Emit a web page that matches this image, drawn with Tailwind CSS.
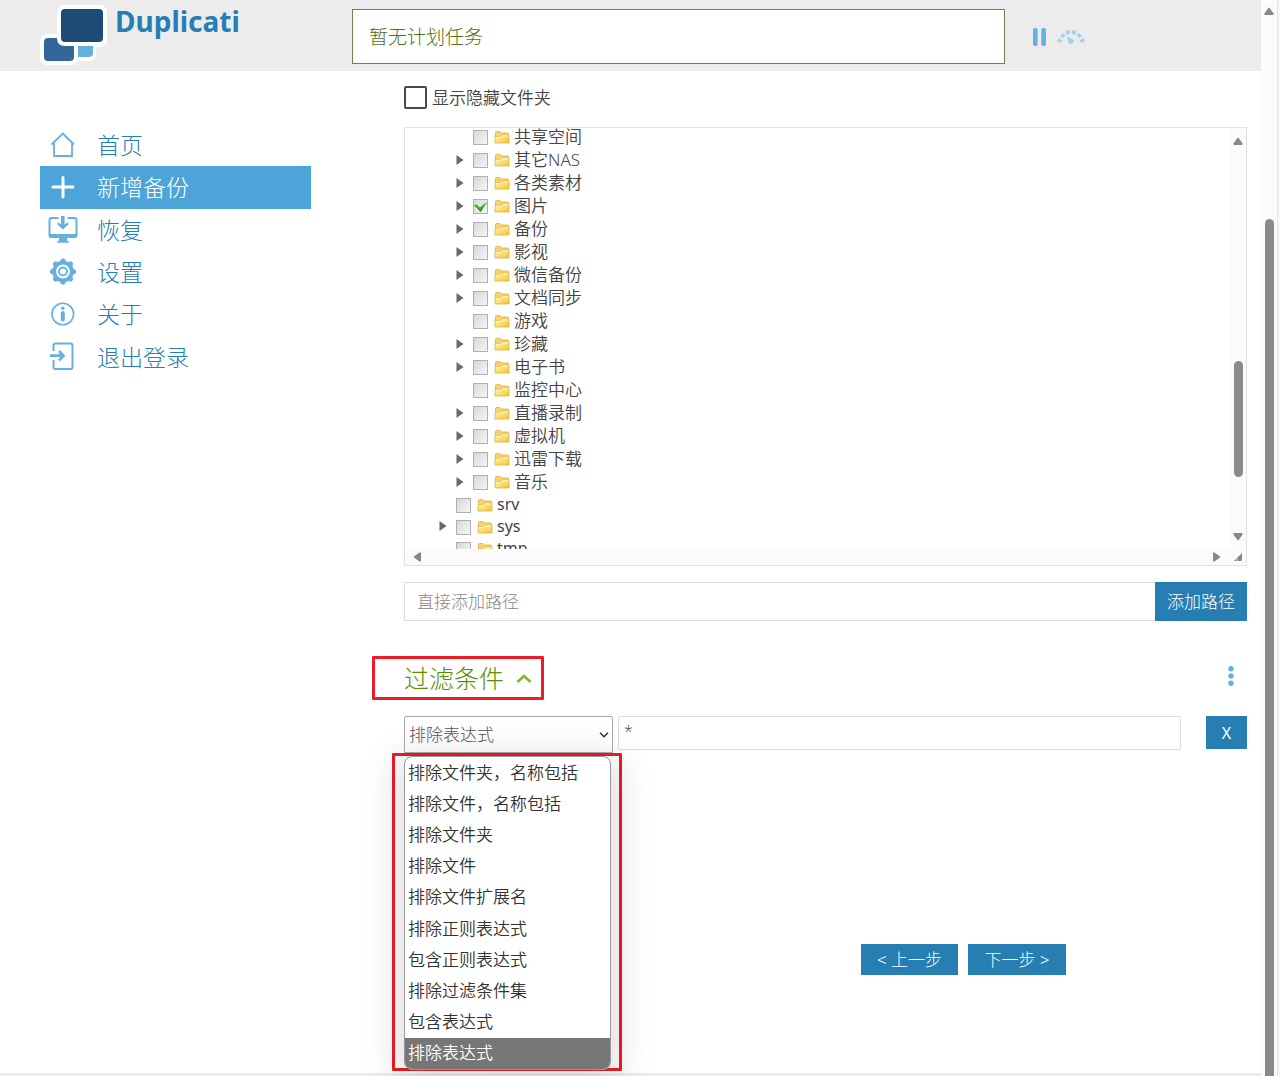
<!DOCTYPE html>
<html lang="zh-CN">
<head>
<meta charset="utf-8">
<title>Duplicati</title>
<script src="https://cdn.jsdelivr.net/npm/@tailwindcss/browser@4"></script>
</head>
<body class="flex min-h-screen bg-white font-light text-[17px] leading-6 text-[#444] font-['Noto_Sans','Noto_Sans_CJK_SC',sans-serif]">

<svg class="absolute h-0 w-0" aria-hidden="true">
  <defs>
    <linearGradient id="fold" x1="0" y1="0" x2="1" y2="1"><stop offset="0" stop-color="#fdf0b8"/><stop offset=".5" stop-color="#f9df74"/><stop offset="1" stop-color="#f0c330"/></linearGradient>
    <linearGradient id="tick" x1="0" y1="0" x2="0" y2="1"><stop offset="0" stop-color="#5fd23c"/><stop offset="1" stop-color="#1f8f12"/></linearGradient>
  </defs>
  <symbol id="folder" viewBox="0 0 16 14">
    <path d="M1.5 12.5V2.5Q1.5 1.5 2.5 1.5H6L7.5 3H13.5Q14.5 3 14.5 4V12.5Z" fill="#f6d465" stroke="#e8b75a"/>
    <path d="M1 13V6.5H6L8 5H15V13Z" fill="url(#fold)" stroke="#eaae3e" stroke-width=".8"/>
    <path d="M2 7.3H6.3L8.3 5.8H14.3" fill="none" stroke="#fffbe6" stroke-width=".9"/>
  </symbol>
  <symbol id="check" viewBox="0 0 16 12"><path d="M.5 4.5L3.5 3.2L7 6.5Q10 2.5 15.5 .8Q11 5 7.6 11.2Q4.5 7 .5 4.5Z" fill="url(#tick)"/></symbol>
  <symbol id="up" viewBox="0 0 10 8"><path d="M4.2 1.2Q5 0 5.8 1.2L9.6 6.6Q10 8 8.8 8H1.2Q0 8 .4 6.6Z" fill="#888"/></symbol>
</svg>

<div class="flex min-w-0 flex-1 flex-col">
  <header class="flex h-[71px] items-start bg-[#ececec]">
    <a href="#" class="flex w-[352px] items-start pl-10">
      <svg class="mt-1 h-[62px] w-[68px]" viewBox="0 0 68 62">
        <rect x="24" y="26" width="32" height="31" rx="7" fill="#fff"/>
        <rect x="0" y="30" width="38" height="31" rx="7" fill="#fff"/>
        <rect x="17" y="1" width="50" height="42" rx="7" fill="#fff"/>
        <path d="M38 42H53V49Q53 53 49 53H38Z" fill="#65b1dd"/>
        <path d="M8 34H17Q17 42 25 42H34V53Q34 57 30 57H8Q4 57 4 53V38Q4 34 8 34Z" fill="#336699"/>
        <rect x="21" y="5" width="42" height="33" rx="4" fill="#1e4a77"/>
      </svg>
      <span class="ml-[7px] text-[28px] leading-[42px] font-bold text-[#277eb3]">Duplicati</span>
    </a>
    <div class="mt-[9px] flex h-[55px] flex-1 items-center border border-[#6b8548] bg-white pl-4 text-[19px] text-[#4d7118]">暂无计划任务</div>
    <div class="flex h-[71px] w-64 items-center pt-0.5 pl-7">
      <button aria-label="暂停" class="mr-[11px]"><svg class="h-[18px] w-[13px]" viewBox="0 0 13 18" fill="#62b1df"><rect width="4.6" height="18" rx="1.8"/><rect x="8.3" width="4.6" height="18" rx="1.8"/></svg></button>
      <button aria-label="限速"><svg class="h-4 w-7" viewBox="0 0 28 16" fill="#a5d1eb">
        <path d="M.3 13.3Q.4 10.2 1.700 9L5.300 11.400L4.800 13.300ZM3 6.700L6.300 4L8.300 6.200L5.800 9.200ZM8.300 2.600Q10.300 1 13 1V5L9.800 5.800ZM14.900 1Q17.800 1 19.700 2.600L18.200 5.800L14.900 5ZM21.700 4L25 6.700L22.200 9.200L19.700 6.200ZM26.300 9Q27.600 10.200 27.700 13.300H23.200L22.700 11.400Z"/>
        <path d="M9.700 7.800L15.400 9.800Q17.500 11.700 16 14Q13.800 15.800 11.800 14Z"/></svg></button>
    </div>
  </header>

  <div class="flex flex-1">
    <nav class="ml-10 mt-[53px] grid h-[254px] w-[271px] shrink-0 grid-rows-6 text-[23px] text-[#277eb3]">
      <a href="#" class="flex items-center gap-[19px] pl-2"><svg class="h-[30px] w-[30px]" viewBox="0 0 30 30" fill="none" stroke="#65b1de" stroke-width="1.8"><path d="M3.5 14.5L14.8 3.5L26 14.5M6 12.5V26H24V12.5"/></svg>首页</a>
      <a href="#" class="flex items-center gap-[19px] bg-[#4ca4d8] pl-2 text-white"><svg class="h-[30px] w-[30px]" viewBox="0 0 30 30" stroke="#fff" stroke-width="3" stroke-linecap="round"><path d="M15 5.5V25M5 15H25"/></svg>新增备份</a>
      <a href="#" class="flex items-center gap-[19px] pl-2"><svg class="h-[30px] w-[30px]" viewBox="0 0 30 30" fill="none" stroke="#65b1de"><path d="M10.5 3H3.5Q1.500 3 1.500 5V20Q1.500 22 3.500 22H26.500Q28.500 22 28.500 20V5Q28.500 3 26.500 3H19.500" stroke-width="2"/><path d="M1 19H29V20.500Q29 22.800 27 22.800H3Q1 22.800 1 20.500Z" fill="#65b1de" stroke="none"/><path d="M11 22.500H19V25.500L21 26.500V27.800H9V26.500L11 25.500Z" fill="#65b1de" stroke="none"/><path d="M14.800 1V12" stroke-width="3.600"/><path d="M9.500 7L14.800 10.500L20.300 7V9.500L14.800 14.500L9.500 9.500Z" fill="#65b1de" stroke="none"/></svg>恢复</a>
      <a href="#" class="flex items-center gap-[19px] pl-2"><svg class="h-[30px] w-[30px]" viewBox="0 0 30 30" fill="none" stroke="#65b1de"><g stroke-width="5.200" stroke-linecap="round"><path d="M15 4V6M15 23V25M4.500 14.500H6M24 14.500H25.500M7.500 7L8.500 8M21.500 21L22.500 22M7.500 22L8.500 21M21.500 8L22.500 7"/></g><circle cx="15" cy="14.500" r="8" stroke-width="5.600"/><circle cx="15" cy="14.500" r="4" stroke-width="2"/><circle cx="15" cy="14.500" r="6" stroke="#fff" stroke-width="1.800"/></svg>设置</a>
      <a href="#" class="flex items-center gap-[19px] pl-2"><svg class="h-[30px] w-[30px]" viewBox="0 0 30 30" fill="none" stroke="#65b1de"><circle cx="14.800" cy="15" r="10.800" stroke-width="1.600"/><path d="M14.800 14V20.500" stroke-width="4" stroke-linecap="round"/><circle cx="14.800" cy="9.300" r="1.700" fill="#65b1de" stroke="none"/></svg>关于</a>
      <a href="#" class="flex items-center gap-[19px] pl-2"><svg class="h-[30px] w-[30px]" viewBox="0 0 30 30" fill="none" stroke="#65b1de"><path d="M5.500 9V3.500Q5.500 1.500 7.500 1.500H22.500Q24.500 1.500 24.500 3.500V25Q24.500 27 22.500 27H7.500Q5.500 27 5.500 25V18" stroke-width="2"/><path d="M2 13.700H15M11 9L15.500 13.700L11 18.400" stroke-width="2.700"/></svg>退出登录</a>
    </nav>

    <main class="ml-[93px] mr-[14px] min-w-0 flex-1 pt-[15px]">
      <label class="flex h-[23px] items-center gap-[5px] font-[350]"><input type="checkbox" class="h-[23px] w-[23px] appearance-none rounded-[2px] border-2 border-[#4a4a4a] bg-white">显示隐藏文件夹</label>

      <div class="mt-[18px] grid h-[439px] grid-cols-[1fr_16px] grid-rows-[1fr_16px] border border-[#e2e2e2]">
        <div class="overflow-hidden"><ul id="tree" class="-mt-[3px]"></ul></div>
        <div class="flex flex-col items-center bg-[#fbfbfb] pt-[9px] pb-2">
          <svg class="h-2 w-2.5"><use href="#up"/></svg>
          <div class="flex-1"></div>
          <div class="mb-14 h-[116px] w-[9px] rounded-full bg-[#8a8a8a]"></div>
          <svg class="h-2 w-2.5 rotate-180"><use href="#up"/></svg>
        </div>
        <div class="flex items-center justify-between bg-[#fbfbfb] pr-2 pl-[7px]">
          <svg class="h-2 w-2.5 -rotate-90"><use href="#up"/></svg>
          <svg class="h-2 w-2.5 rotate-90"><use href="#up"/></svg>
        </div>
        <div class="flex items-center justify-center bg-[#fbfbfb]"><svg class="h-2 w-2" viewBox="0 0 8 8"><path d="M8 0V6.500Q8 8 6.500 8H0Z" fill="#888"/><path d="M3.300 8L2.800 5.500" stroke="#fbfbfb" stroke-width=".7"/></svg></div>
      </div>

      <div class="mt-4 flex h-[39px]">
        <input type="text" aria-label="直接添加路径" placeholder="直接添加路径" class="min-w-0 flex-1 border border-r-0 border-[#ddd] px-3 placeholder:text-[#888]">
        <button class="w-[92px] bg-[#277eb3] text-white">添加路径</button>
      </div>

      <div class="mt-[35px] flex items-start justify-between">
        <h2 class="-ml-8 flex h-11 w-[172px] items-center rounded-[1px] border-[3px] border-[#ee1c25] pl-[29px] text-[25px] text-[#5b8f00]">过滤条件<svg class="ml-3 h-[9px] w-4" viewBox="0 0 16 9" fill="none" stroke="#80b92b" stroke-width="2.600"><path d="M1.500 8L8 2L14.500 8"/></svg></h2>
        <button aria-label="更多" class="mt-2.5 mr-[13px]"><svg class="h-5 w-1.5" viewBox="0 0 6 20" fill="#62b1df"><circle cx="3" cy="2.700" r="2.700"/><circle cx="3" cy="10" r="2.700"/><circle cx="3" cy="17.300" r="2.700"/></svg></button>
      </div>

      <div class="mt-4 flex items-start">
        <div class="relative h-[37px] w-[209px]">
          <select aria-label="过滤类型" class="h-[37px] w-full appearance-none rounded-t-[2px] border border-[#aaa] bg-white pl-1 text-[#555]"><option>排除表达式</option></select>
          <svg class="pointer-events-none absolute top-4 right-1 h-1.5 w-2.5" viewBox="0 0 10 6" fill="none" stroke="#333" stroke-width="1.500"><path d="M1 .8L5 4.800L9 .8"/></svg>
          <div class="absolute top-[37px] -left-3 h-[318px] w-[230px] rounded-[1px] border-[3px] border-[#ee1c25] px-2">
            <ul role="listbox" aria-label="过滤类型选项" class="ml-px grid h-[314px] grid-rows-10 overflow-hidden rounded-lg border border-[#999] bg-white font-[350] text-[#333] shadow-[0_6px_36px_8px_rgba(0,0,0,0.13)]">
              <li role="option" class="flex items-center pl-[3px]">排除文件夹，名称包括</li>
              <li role="option" class="flex items-center pl-[3px]">排除文件，名称包括</li>
              <li role="option" class="flex items-center pl-[3px]">排除文件夹</li>
              <li role="option" class="flex items-center pl-[3px]">排除文件</li>
              <li role="option" class="flex items-center pl-[3px]">排除文件扩展名</li>
              <li role="option" class="flex items-center pl-[3px]">排除正则表达式</li>
              <li role="option" class="flex items-center pl-[3px]">包含正则表达式</li>
              <li role="option" class="flex items-center pl-[3px]">排除过滤条件集</li>
              <li role="option" class="flex items-center pl-[3px]">包含表达式</li>
              <li role="option" aria-selected="true" class="flex items-center bg-[#767676] pl-[3px] text-white">排除表达式</li>
            </ul>
          </div>
        </div>
        <input type="text" aria-label="表达式" value="*" class="ml-[5px] h-[34px] min-w-0 flex-1 rounded-[2px] border border-[#ddd] px-[5px] pb-1 text-base text-[#555]">
        <button class="ml-[25px] h-[33px] w-[41px] bg-[#277eb3] text-base font-normal text-white">X</button>
      </div>

      <div class="mt-[191px] flex justify-end gap-2.5 pr-[181px] text-white">
        <button class="h-[31px] w-[97px] bg-[#277eb3]">&lt; 上一步</button>
        <button class="h-[31px] w-[98px] bg-[#277eb3]">下一步 &gt;</button>
      </div>
    </main>
  </div>
  <footer class="h-[3px] bg-[#ececec]"></footer>
</div>

<div class="flex w-4 flex-col items-center bg-[#fcfcfc] pt-[7px]">
  <svg class="h-2 w-2.5 shrink-0"><use href="#up"/></svg>
  <div class="mt-[204px] w-[9px] flex-1 rounded-t-full bg-[#8a8a8a]"></div>
</div>
<div class="w-[3px] border-l border-[#e4e4e4] bg-[#f7f7f7]"></div>

<script>
  // [name, depth, expandable, checked]
  const folders = [
    ['共享空间', 2, 0], ['其它NAS', 2, 1], ['各类素材', 2, 1], ['图片', 2, 1, 1], ['备份', 2, 1],
    ['影视', 2, 1], ['微信备份', 2, 1], ['文档同步', 2, 1], ['游戏', 2, 0], ['珍藏', 2, 1],
    ['电子书', 2, 1], ['监控中心', 2, 0], ['直播录制', 2, 1], ['虚拟机', 2, 1], ['迅雷下载', 2, 1],
    ['音乐', 2, 1], ['srv', 1, 0], ['sys', 1, 1], ['tmp', 1, 0]
  ];
  document.getElementById('tree').innerHTML = folders.map(([name, depth, open, on]) => `
    <li class="${depth === 2 ? 'flex h-[23px] items-center pl-[51px] font-[350]' : 'flex h-[22px] items-center pl-[34px] text-base font-normal'}">
      <span class="flex w-[17px] shrink-0">${open ? '<svg class="h-2.5 w-2" viewBox="0 0 8 10"><path d="M.5 0L7.500 5L.5 10Z" fill="#6a6a6a"/></svg>' : ''}</span>
      <label class="flex items-center">
        <span class="relative mt-0.5 h-[15px] w-[15px]">
          <input type="checkbox" ${on ? 'checked' : ''} class="block h-[15px] w-[15px] appearance-none border border-[#b0b0b0] bg-linear-to-br from-[#d8d8d8] to-[#f6f6f6]">
          ${on ? '<svg class="absolute top-0.5 left-0 h-3 w-4"><use href="#check"/></svg>' : ''}
        </span>
        <svg class="mt-px ml-1.5 mr-1 h-3.5 w-4"><use href="#folder"/></svg>${name}
      </label>
    </li>`).join('');
</script>
</body>
</html>
